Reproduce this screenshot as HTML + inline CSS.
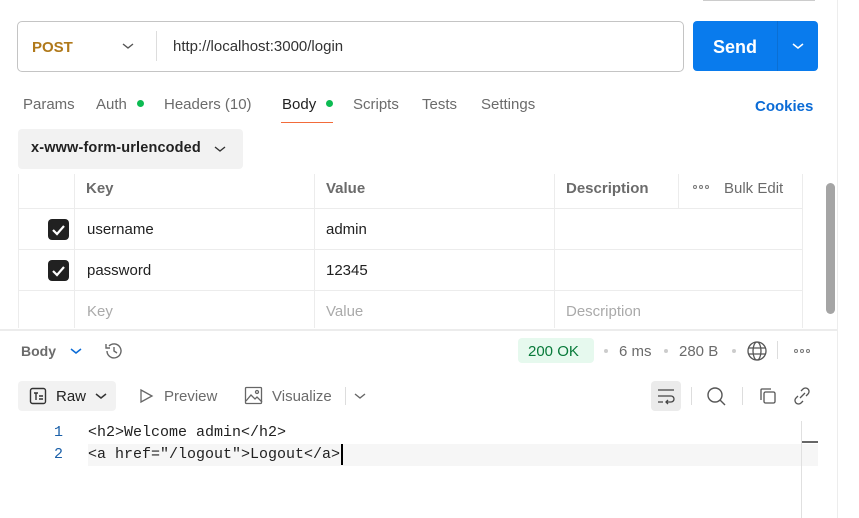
<!DOCTYPE html>
<html><head><style>
*{box-sizing:border-box;margin:0;padding:0}
body{width:859px;height:518px;background:#fff;font-family:"Liberation Sans",sans-serif;position:relative;overflow:hidden;color:#212121}
.a{position:absolute}
.t{font-size:15px;color:#6b6b6b;top:96px}
.line{background:#ececec}
.mono{font-family:"Liberation Mono",monospace;font-size:15px;color:#212121}
.dots{display:flex;gap:2px}
.dots i{display:block;width:4px;height:4px;border:1px solid #777;border-radius:50%}
</style></head><body>
<div class="a" style="left:703px;top:0;width:112px;height:1px;background:#ccc"></div>
<div class="a" style="left:837px;top:0;width:1px;height:518px;background:#ededed"></div>
<div class="a" style="left:17px;top:21px;width:667px;height:51px;border:1px solid #c4c4c4;border-radius:5px"></div>
<div class="a" style="left:32px;top:39px;font-size:15px;font-weight:bold;color:#b0791a">POST</div>
<svg class="a" style="left:121px;top:41px" width="14" height="10"><path d="M2 3l5 4 5-4" fill="none" stroke="#555" stroke-width="1.4"/></svg>
<div class="a" style="left:156px;top:31px;width:1px;height:30px;background:#ddd"></div>
<div class="a" style="left:173px;top:38px;font-size:15px;color:#333">http://localhost:3000/login</div>
<div class="a" style="left:693px;top:21px;width:125px;height:50px;background:#097bed;border-radius:4px"></div>
<div class="a" style="left:777px;top:21px;width:1px;height:50px;background:#0a6fd4"></div>
<div class="a" style="left:713px;top:37px;font-size:18px;font-weight:bold;color:#fff">Send</div>
<svg class="a" style="left:791px;top:41px" width="14" height="10"><path d="M2 3l5 4 5-4" fill="none" stroke="#fff" stroke-width="1.5"/></svg>
<div class="a t" style="left:23px">Params</div>
<div class="a t" style="left:96px">Auth</div><div class="a" style="left:137px;top:100px;width:7px;height:7px;border-radius:50%;background:#0cbb52"></div>
<div class="a t" style="left:164px">Headers (10)</div>
<div class="a t" style="left:282px;color:#212121">Body</div><div class="a" style="left:326px;top:100px;width:7px;height:7px;border-radius:50%;background:#0cbb52"></div>
<div class="a" style="left:281px;top:122px;width:52px;height:1px;background:#f26b3a"></div>
<div class="a t" style="left:353px">Scripts</div>
<div class="a t" style="left:422px">Tests</div>
<div class="a t" style="left:481px">Settings</div>
<div class="a" style="left:755px;top:98px;font-size:15px;font-weight:bold;color:#0a6bd6">Cookies</div>
<div class="a" style="left:18px;top:129px;width:225px;height:40px;background:#f2f2f2;border-radius:4px"></div>
<div class="a" style="left:31px;top:140px;font-size:14.5px;font-weight:bold;color:#212121;letter-spacing:0.15px">x-www-form-urlencoded</div>
<svg class="a" style="left:213px;top:144px" width="14" height="10"><path d="M2 3l5 4 5-4" fill="none" stroke="#333" stroke-width="1.4"/></svg>
<div class="a line" style="left:18px;top:174px;width:1px;height:154px"></div>
<div class="a line" style="left:74px;top:174px;width:1px;height:154px"></div>
<div class="a line" style="left:314px;top:174px;width:1px;height:154px"></div>
<div class="a line" style="left:554px;top:174px;width:1px;height:154px"></div>
<div class="a line" style="left:678px;top:174px;width:1px;height:34px"></div>
<div class="a line" style="left:802px;top:174px;width:1px;height:154px"></div>
<div class="a line" style="left:18px;top:208px;width:785px;height:1px"></div>
<div class="a line" style="left:18px;top:249px;width:785px;height:1px"></div>
<div class="a line" style="left:18px;top:290px;width:785px;height:1px"></div>
<div class="a" style="left:0;top:329px;width:837px;height:2px;background:#ececec"></div>
<div class="a" style="left:826px;top:183px;width:9px;height:131px;background:#a5a5a5;border-radius:5px"></div>
<div class="a" style="left:86px;top:180px;font-size:15px;font-weight:bold;color:#6b6b6b">Key</div>
<div class="a" style="left:326px;top:180px;font-size:15px;font-weight:bold;color:#6b6b6b">Value</div>
<div class="a" style="left:566px;top:180px;font-size:15px;font-weight:bold;color:#6b6b6b">Description</div>
<div class="a dots" style="left:693px;top:185px"><i></i><i></i><i></i></div>
<div class="a" style="left:724px;top:180px;font-size:15px;color:#6b6b6b">Bulk Edit</div>
<div class="a" style="left:48px;top:219px;width:21px;height:21px;background:#212121;border-radius:4px"></div>
<svg class="a" style="left:48px;top:219px" width="21" height="21"><path d="M5 11l4 4 7-8" fill="none" stroke="#fff" stroke-width="2.2"/></svg>
<div class="a" style="left:48px;top:260px;width:21px;height:21px;background:#212121;border-radius:4px"></div>
<svg class="a" style="left:48px;top:260px" width="21" height="21"><path d="M5 11l4 4 7-8" fill="none" stroke="#fff" stroke-width="2.2"/></svg>
<div class="a" style="left:87px;top:221px;font-size:15px">username</div>
<div class="a" style="left:326px;top:221px;font-size:15px">admin</div>
<div class="a" style="left:87px;top:262px;font-size:15px">password</div>
<div class="a" style="left:326px;top:262px;font-size:15px">12345</div>
<div class="a" style="left:87px;top:303px;font-size:15px;color:#aaa">Key</div>
<div class="a" style="left:326px;top:303px;font-size:15px;color:#aaa">Value</div>
<div class="a" style="left:566px;top:303px;font-size:15px;color:#aaa">Description</div>
<div class="a" style="left:21px;top:343px;font-size:14px;font-weight:bold;color:#6b6b6b">Body</div>
<svg class="a" style="left:69px;top:346px" width="14" height="10"><path d="M2 3l5 4 5-4" fill="none" stroke="#0a6bd6" stroke-width="1.5"/></svg>
<svg class="a" style="left:103px;top:340px" width="22" height="22" fill="none" stroke="#666" stroke-width="1.4"><path d="M4 11a7 7 0 1 0 2-5"/><path d="M3 4v4h4"/><path d="M11 7v4l3 2"/></svg>
<div class="a" style="left:518px;top:338px;width:76px;height:25px;background:#e6f9ee;border-radius:4px"></div>
<div class="a" style="left:528px;top:343px;font-size:15px;color:#087a3a">200 OK</div>
<div class="a" style="left:604px;top:349px;width:4px;height:4px;border-radius:50%;background:#ccc"></div>
<div class="a" style="left:619px;top:343px;font-size:15px;color:#6b6b6b">6 ms</div>
<div class="a" style="left:664px;top:349px;width:4px;height:4px;border-radius:50%;background:#ccc"></div>
<div class="a" style="left:679px;top:343px;font-size:15px;color:#6b6b6b">280 B</div>
<div class="a" style="left:732px;top:349px;width:4px;height:4px;border-radius:50%;background:#ccc"></div>
<svg class="a" style="left:746px;top:340px" width="22" height="22" fill="none" stroke="#555" stroke-width="1.3"><circle cx="11" cy="11" r="9"/><ellipse cx="11" cy="11" rx="4" ry="9"/><path d="M2 8h18M2 14h18"/></svg>
<div class="a" style="left:777px;top:341px;width:1px;height:18px;background:#ddd"></div>
<div class="a dots" style="left:794px;top:349px"><i></i><i></i><i></i></div>
<div class="a" style="left:18px;top:381px;width:98px;height:30px;background:#f2f2f2;border-radius:4px"></div>
<svg class="a" style="left:29px;top:387px" width="18" height="18" fill="none" stroke="#333" stroke-width="1.4"><rect x="1.5" y="1.5" width="15" height="15" rx="2"/><path d="M5 6h4M7 6v7M10 9h4M10 12h4"/></svg>
<div class="a" style="left:56px;top:388px;font-size:15px">Raw</div>
<svg class="a" style="left:94px;top:391px" width="14" height="10"><path d="M2 3l5 4 5-4" fill="none" stroke="#333" stroke-width="1.5"/></svg>
<svg class="a" style="left:138px;top:388px" width="16" height="16" fill="none" stroke="#666" stroke-width="1.3"><path d="M3 2l11 6-11 6z"/></svg>
<div class="a" style="left:164px;top:388px;font-size:15px;color:#6b6b6b">Preview</div>
<svg class="a" style="left:244px;top:386px" width="19" height="19" fill="none" stroke="#666" stroke-width="1.3"><rect x="1.5" y="1.5" width="16" height="16" rx="1"/><path d="M2 15l5-6 4 4 2-2 5 5"/><circle cx="13" cy="6" r="1.5"/></svg>
<div class="a" style="left:272px;top:388px;font-size:15px;color:#6b6b6b">Visualize</div>
<div class="a" style="left:345px;top:387px;width:1px;height:18px;background:#ddd"></div>
<svg class="a" style="left:353px;top:391px" width="14" height="10"><path d="M2 3l5 4 5-4" fill="none" stroke="#666" stroke-width="1.4"/></svg>
<div class="a" style="left:651px;top:381px;width:30px;height:30px;background:#ebebeb;border-radius:4px"></div>
<svg class="a" style="left:655px;top:385px" width="22" height="22" fill="none" stroke="#444" stroke-width="1.3"><path d="M3 5h16M3 11h13a3 3 0 0 1 0 6h-5M13 15l-2 2 2 2M3 17h5"/></svg>
<div class="a" style="left:691px;top:387px;width:1px;height:18px;background:#ddd"></div>
<svg class="a" style="left:706px;top:386px" width="20" height="20" fill="none" stroke="#555" stroke-width="1.4"><circle cx="9" cy="9" r="7"/><path d="M14 14l5 5"/></svg>
<div class="a" style="left:742px;top:387px;width:1px;height:18px;background:#ddd"></div>
<svg class="a" style="left:758px;top:386px" width="20" height="20" fill="none" stroke="#555" stroke-width="1.3"><path d="M3 14V4a1 1 0 0 1 1-1h9"/><rect x="6" y="6" width="11" height="11" rx="1.5"/></svg>
<svg class="a" style="left:792px;top:386px" width="20" height="20" fill="none" stroke="#555" stroke-width="1.3"><path d="M8 12l5-5M9 5l2-2a3.5 3.5 0 0 1 5 5l-2 2M11 15l-2 2a3.5 3.5 0 0 1-5-5l2-2"/></svg>
<div class="a" style="left:88px;top:444px;width:730px;height:22px;background:#f6f6f6"></div>
<div class="a" style="left:801px;top:421px;width:1px;height:97px;background:#e0e0e0"></div>
<div class="a" style="left:802px;top:441px;width:16px;height:2px;background:#666"></div>
<div class="a mono" style="left:54px;top:424px;color:#1a5fa8">1</div>
<div class="a mono" style="left:54px;top:446px;color:#1a5fa8">2</div>
<div class="a mono" style="left:88px;top:424px">&lt;h2&gt;Welcome admin&lt;/h2&gt;</div>
<div class="a mono" style="left:88px;top:446px">&lt;a href="/logout"&gt;Logout&lt;/a&gt;</div>
<div class="a" style="left:341px;top:444px;width:2px;height:21px;background:#000"></div>
</body></html>
